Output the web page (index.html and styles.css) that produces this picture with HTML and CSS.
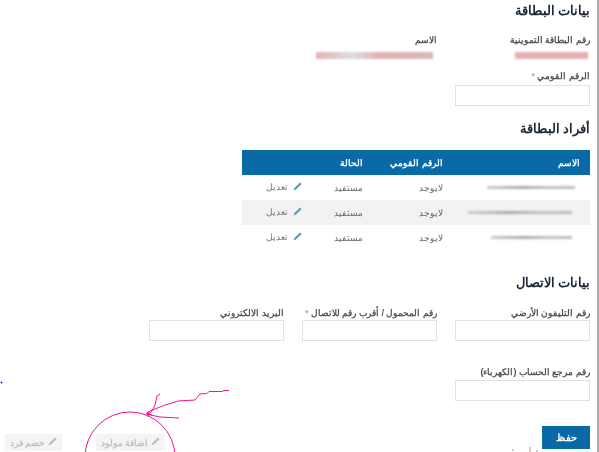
FILE: index.html
```html
<!DOCTYPE html>
<html lang="ar" dir="rtl">
<head>
<meta charset="utf-8">
<title>بيانات البطاقة</title>
<link rel="stylesheet" href="styles.css">
</head>
<body>
<main class="page">
  <h2 class="heading heading-first">بيانات البطاقة</h2>
  <div class="info-row">
    <div class="info-cell">
      <div class="label">رقم البطاقة التموينية</div>
      <div class="smear smear-card"></div>
    </div>
    <div class="info-cell info-name">
      <div class="label">الاسم</div>
      <div class="smear smear-name"></div>
    </div>
  </div>
  <div class="field field-national">
    <label class="label">الرقم القومي <span class="req">*</span></label>
    <div class="input"></div>
  </div>

  <h2 class="heading heading-members">أفراد البطاقة</h2>
  <table class="table">
    <thead>
      <tr><th class="col-name">الاسم</th><th class="col-id">الرقم القومي</th><th class="col-state">الحالة</th><th class="col-edit"></th></tr>
    </thead>
    <tbody>
      <tr>
        <td><div class="blur-name blur-a"></div></td><td>لايوجد</td><td>مستفيد</td>
        <td><span class="edit"><svg class="pencil" viewBox="0 0 10 10"><path d="M9.5 2.2 7.8.5 1.6 6.7.5 9.5l2.8-1.1z"/></svg> تعديل</span></td>
      </tr>
      <tr class="alt">
        <td><div class="blur-name blur-b"></div></td><td>لايوجد</td><td>مستفيد</td>
        <td><span class="edit"><svg class="pencil" viewBox="0 0 10 10"><path d="M9.5 2.2 7.8.5 1.6 6.7.5 9.5l2.8-1.1z"/></svg> تعديل</span></td>
      </tr>
      <tr>
        <td><div class="blur-name blur-c"></div></td><td>لايوجد</td><td>مستفيد</td>
        <td><span class="edit"><svg class="pencil" viewBox="0 0 10 10"><path d="M9.5 2.2 7.8.5 1.6 6.7.5 9.5l2.8-1.1z"/></svg> تعديل</span></td>
      </tr>
    </tbody>
  </table>

  <h2 class="heading heading-contact">بيانات الاتصال</h2>
  <div class="contact-grid">
    <div class="field"><label class="label">رقم التليفون الأرضي</label><div class="input"></div></div>
    <div class="field"><label class="label">رقم المحمول / أقرب رقم للاتصال <span class="req">*</span></label><div class="input"></div></div>
    <div class="field"><label class="label">البريد الالكتروني</label><div class="input"></div></div>
  </div>
  <div class="field field-account">
    <label class="label">رقم مرجع الحساب (الكهرباء)</label>
    <div class="input"></div>
  </div>

  <div class="actions">
    <button class="save" type="button">حفظ</button>
    <div class="secondary">
      <button class="ghost ghost-add" type="button"><svg class="pencil pencil-ghost" viewBox="0 0 10 10"><path d="M9.5 2.2 7.8.5 1.6 6.7.5 9.5l2.8-1.1z"/></svg> اضافة مولود</button>
      <button class="ghost ghost-sub" type="button"><svg class="pencil pencil-ghost" viewBox="0 0 10 10"><path d="M9.5 2.2 7.8.5 1.6 6.7.5 9.5l2.8-1.1z"/></svg> خصم فرد</button>
    </div>
  </div>
</main>
<svg class="annotation" viewBox="0 0 599 452" aria-hidden="true">
  <circle class="ink" cx="130" cy="457" r="45"/>
  <path class="ink" d="M229 390.500h-5l-2 1h-13l-2 2-7 .5-5 6-17 1-13 4-15 6-3 2"/>
  <path class="ink" d="M160 394l-3 2-2 9-3 6-3 3"/>
  <path class="ink" d="M146 414l14 3 19 1"/>
  <path class="ink" d="M146 413l6 2M149 411l-1 6"/>
  <circle class="dot" cx="1.500" cy="382.500" r="1"/>
  <path class="specks" d="M513 449v2M530 447v5M537 450v2"/>
</svg>
</body>
</html>
```

FILE: styles.css
```css
html, body {
  margin: 0;
  height: 452px;
  overflow: hidden;
  background: #fff;
}

body {
  font-family: "Liberation Sans", sans-serif;
  color: #333;
}

.page {
  box-sizing: border-box;
  width: 599px;
  height: 452px;
  padding: 0 7px 0 5px;
  border-right: 2px solid #a9a9a9;
  overflow: hidden;
  filter: blur(0.35px);
}

.heading {
  margin: 0;
  font-size: 12.5px;
  line-height: 18px;
  font-weight: bold;
  color: #1c2733;
}

.heading-first { padding-top: 2px; }
.heading-members { margin-top: 14px; }
.heading-contact { margin-top: 24px; }

.label {
  display: block;
  font-size: 9px;
  line-height: 12px;
  font-weight: bold;
  color: #555;
  white-space: nowrap;
}

.req { color: #d9a0a0; }

.info-row {
  display: flex;
  margin-top: 14px;
}

.info-cell { width: 153px; }
.info-name { width: 125px; }

.smear {
  margin-top: 6px;
  height: 7px;
  filter: blur(1.2px);
  background: #e3b1b1;
}

.smear-card { width: 73px; margin-right: 2px; }
.smear-name {
  width: 117px;
  margin-right: 4px;
  background: linear-gradient(90deg, #e3b1b1, #ddd 30%, #e3b1b1 55%, #d9b9b9);
}

.field { width: 135px; }

.field-national { margin-top: 11px; }
.field-national .input { margin-top: 3px; }

.input {
  box-sizing: border-box;
  height: 21px;
  margin-top: 2px;
  border: 1px solid #e2e2e2;
  background: #fff;
}

.table {
  width: 348px;
  margin-top: 12px;
  margin-left: 0;
  border-collapse: collapse;
  table-layout: fixed;
  font-size: 9px;
}

.table th {
  height: 25px;
  padding: 0;
  background: #0a6aa8;
  color: #fff;
  font-size: 9px;
  font-weight: bold;
  text-align: right;
}

.table td {
  height: 25px;
  padding: 0;
  color: #666;
  text-align: right;
}

.table th:first-child,
.table td:first-child { padding-right: 10px; }

.col-name { width: 137px; }
.col-id { width: 80px; }
.col-state { width: 58px; }

.alt td { background: #f2f2f2; }

.blur-name {
  height: 3px;
  background: linear-gradient(90deg, #ccc, #aaa 40%, #c4c4c4 70%, #bbb);
  filter: blur(1.2px);
}

.blur-a { width: 88px; margin-right: 5px; }
.blur-b { width: 104px; margin-right: 8px; }
.blur-c { width: 81px; margin-right: 8px; }

.edit {
  display: inline-flex;
  align-items: center;
  gap: 5px;
  margin-right: 3px;
  color: #777;
}

.pencil {
  width: 9px;
  height: 9px;
  fill: #5a9ab5;
}

.pencil-ghost { fill: #bcbcbc; }

.contact-grid {
  display: grid;
  grid-template-columns: repeat(3, 135px);
  column-gap: 18px;
  margin-top: 15px;
}

.contact-grid .input { margin-top: 1px; }

.field-account { margin-top: 25px; }

.actions {
  display: flex;
  justify-content: space-between;
  align-items: flex-start;
  margin-top: 25px;
}

.save {
  width: 48px;
  height: 23px;
  padding: 0;
  border: 0;
  background: #0a6aa8;
  color: #fff;
  font: bold 10px "Liberation Sans", sans-serif;
}

.secondary {
  display: flex;
  gap: 34px;
  padding-top: 8px;
}

.ghost {
  height: 17px;
  padding: 0;
  border: 0;
  background: #f4f4f4;
  color: #c2c2c2;
  font: bold 9px "Liberation Sans", sans-serif;
}

.ghost-add { width: 69px; }
.ghost-sub { width: 57px; }

.annotation {
  position: absolute;
  left: 0;
  top: 0;
  width: 599px;
  height: 452px;
  pointer-events: none;
}

.ink {
  fill: none;
  stroke: #f0148c;
  stroke-width: 1;
}

.dot { fill: #2222dd; }

.specks {
  fill: none;
  stroke: #999;
  stroke-width: 1;
}
```
